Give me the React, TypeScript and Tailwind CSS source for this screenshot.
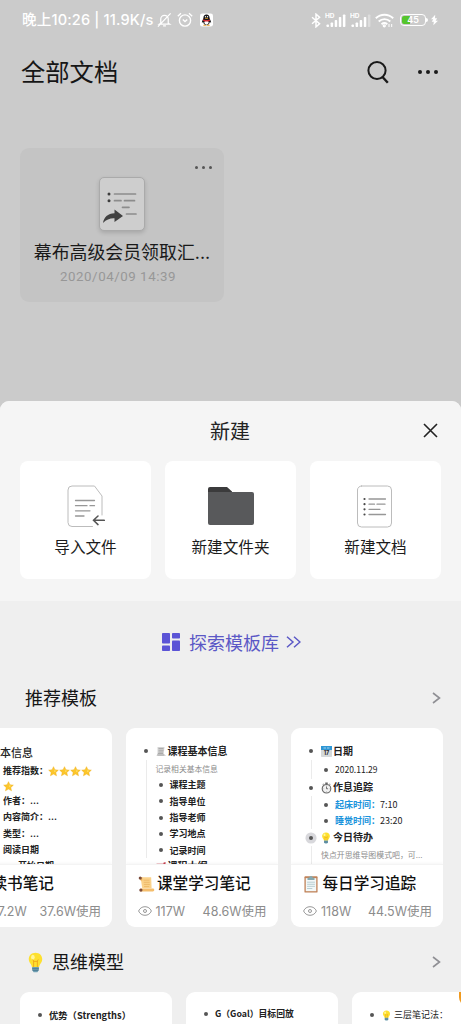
import type { ReactNode } from 'react';
import clsx from 'clsx';

type IconProps = { className?: string };

const Star = () => (
  <svg viewBox="0 0 20 20" className="inline-block w-[11px] h-[11px]">
    <path
      d="M10 1.2l2.6 5.6 6.2.7-4.6 4.2 1.3 6.1L10 14.7l-5.5 3.1 1.3-6.1L1.2 7.5l6.2-.7z"
      fill="#fcc62b"
      stroke="#f0ae1c"
      strokeWidth="0.8"
      strokeLinejoin="round"
    />
    <path d="M10 4l1.2 4.2 4 .4-3.5 2.2z" fill="#ffe680" />
  </svg>
);

const Bulb = ({ className }: IconProps) => (
  <svg viewBox="0 0 20 28" className={className}>
    <path
      d="M10 1C4.6 1 1 4.8 1 9.6c0 3.6 2.2 5.6 3.4 7.8.6 1.1.7 2.2.9 3.1h9.4c.2-.9.3-2 .9-3.1C16.8 15.2 19 13.2 19 9.6 19 4.8 15.4 1 10 1z"
      fill="#fde02f"
    />
    <ellipse cx="6.5" cy="7" rx="2.4" ry="3.4" fill="#fff59b" />
    <path d="M7.5 20V12l-1.2-2M12.5 20V12l1.2-2M7 12.5h6" stroke="#f0a81c" strokeWidth="1.3" fill="none" />
    <path d="M5.5 20h9v4l-2 3h-5l-2-3z" fill="#6f9fb3" />
    <path d="M5.5 22.2h9M6 24.5h8" stroke="#3f6f84" strokeWidth="0.9" />
  </svg>
);

const Scroll = ({ className }: IconProps) => (
  <svg viewBox="0 0 20 20" className={className}>
    <path d="M3 2h12.5l.5 13H5z" fill="#fbd28a" />
    <path d="M6.5 5.5h7M6.7 8h7M6.9 10.5h7M7.1 13h6" stroke="#e9b361" strokeWidth="0.9" />
    <path d="M3 15.3h14.5a1.7 1.7 0 010 3.4H3z" fill="#f4bd6c" />
    <path d="M2 2h3v4H3.5A2 2 0 012 4z" fill="#eeb058" />
    <circle cx="2.6" cy="3" r="1.8" fill="#7a4a3a" />
    <circle cx="3.4" cy="17.2" r="1.9" fill="#7a4a3a" />
  </svg>
);

const Clipboard = ({ className }: IconProps) => (
  <svg viewBox="0 0 16 20" className={className} preserveAspectRatio="none">
    <rect x="0.5" y="1.5" width="15" height="18" rx="1" fill="#c08258" />
    <rect x="2" y="3.5" width="12" height="14.5" fill="#f3f8f8" />
    <path d="M3.5 8h9M3.5 10.3h9M3.5 12.6h9M3.5 15h6" stroke="#a9c4c9" strokeWidth="0.9" />
    <path d="M4 5.5V3h2a2 2 0 014 0h2v2.5z" fill="#86a9b0" />
  </svg>
);

const Newspaper = ({ className }: IconProps) => (
  <svg viewBox="0 0 20 20" className={className}>
    <path d="M3 1h14l-1.500 13L20 19H1l2-6z" fill="#d4d4d4" />
    <path d="M5 4h10M5 7.500h10M5 11h9M4 14h10M3 17h13" stroke="#959595" strokeWidth="1.300" />
  </svg>
);

const Calendar = ({ className }: IconProps) => (
  <svg viewBox="0 0 22 22" className={className}>
    <rect width="22" height="22" rx="1.500" fill="#d5d9da" />
    <path d="M0 0h22v8H0z" fill="#2e96d4" />
    <path d="M5 4h5M12 4h5" stroke="#c9e6f6" strokeWidth="1.500" />
    <text x="11" y="18.500" textAnchor="middle" fontSize="11" fontWeight="700" fill="#222">
      17
    </text>
  </svg>
);

const Stopwatch = ({ className }: IconProps) => (
  <svg viewBox="0 0 22 24" className={className}>
    <path d="M8.500 1h5v3h-5zM2.500 5l2-2 2 2M15.500 5l2-2 2 2" fill="#666" />
    <circle cx="11" cy="13.500" r="8.600" fill="#f1f1f1" stroke="#686868" strokeWidth="2.200" />
    <path d="M11 7v1.500M11 18.500V20M4.800 13.500h1.500M15.700 13.500h1.500" stroke="#888" />
    <path d="M11 9v4.500h3" stroke="#444" strokeWidth="1.400" fill="none" />
  </svg>
);

const Pin = ({ className }: IconProps) => (
  <svg viewBox="0 0 20 20" className={className}>
    <path d="M1 3h13l3-2v8l-5 9H5z" fill="#dc8f97" />
    <path d="M14 2l5-2v6z" fill="#c23b49" />
  </svg>
);

const Eye = () => (
  <svg viewBox="0 0 14 10" className="w-[14px] h-[10px] -mt-[3px]" fill="none" stroke="#8c8c8c" strokeWidth="0.9">
    <path d="M.6 5C1.7 2.3 4.1.7 7 .7s5.300 1.600 6.400 4.300C12.300 7.700 9.900 9.300 7 9.300S1.700 7.700.6 5z" />
    <circle cx="7" cy="5" r="1.500" />
  </svg>
);

const Chevron = () => (
  <svg viewBox="0 0 9 12" className="w-[9px] h-[12px] -mt-[2px]" fill="none" stroke="#8f8f94" strokeWidth="1.6">
    <path d="M1 1l6.5 5L1 11" />
  </svg>
);

const Signal = ({ weak }: { weak?: boolean }) => (
  <svg viewBox="0 0 21 15" className="w-[21px] h-[15px]" fill="#fff">
    <text x="0" y="5.3" fontSize="6.5" fontWeight="700" fontFamily="Inter, sans-serif">
      HD
    </text>
    <rect x="1.5" y="11.5" width="2.5" height="2.5" rx="0.8" />
    <rect x="5.6" y="9.5" width="2.5" height="4.5" rx="0.8" />
    <rect x="9.7" y="7" width="2.5" height="7" rx="0.8" />
    <rect x="13.8" y="4" width="2.5" height="10" rx="0.8" />
    <rect x="17.9" y="1.5" width="2.5" height="12.5" rx="0.8" opacity={weak ? 0.35 : 1} />
  </svg>
);

const StatusBar = () => (
  <div className="h-10 pl-[22px] pr-[23px] flex items-center justify-between text-white">
    <div className="flex items-center">
      <span className="w-[132px] text-[14.6px] leading-5 font-medium whitespace-pre tracking-[0.15px]">
        晚上10:26 | 11.9K/s
      </span>
      <svg viewBox="0 0 16 16" className="ml-[3px] w-[15px] h-[16px]" fill="none" stroke="#fff" strokeWidth="1.3">
        <path d="M4 11.5V7a4 4 0 018 0v4.5l1.5 1h-11zM6.5 14.2h3M14.5 1L1 15" />
      </svg>
      <svg viewBox="0 0 16 16" className="ml-[5px] w-[16px] h-[16px]" fill="none" stroke="#fff" strokeWidth="1.4">
        <circle cx="8" cy="8.5" r="5.6" />
        <path d="M.8 4.2L4 1.3M15.2 4.2L12 1.3M5.8 7.5L8 9.5l2.3-2" />
      </svg>
      <svg viewBox="0 0 14 14" className="ml-[7px] w-[13px] h-[14px]">
        <rect width="14" height="14" rx="2.5" fill="#fff" />
        <path
          d="M7 1.2c-2.3 0-3.3 1.7-3.3 3.5 0 1.5-1.7 3-1.7 5.2l1.4-.8C4 11.5 5.3 12.6 7 12.6s3-1.1 3.600-3.5l1.4.8c0-2.2-1.7-3.7-1.7-5.2 0-1.8-1-3.5-3.3-3.5z"
          fill="#17171a"
        />
        <ellipse cx="7" cy="9.8" rx="2.3" ry="2.3" fill="#fff" />
        <path d="M3.5 6.3c2 1.2 5 1.2 7 0l.3 1.5c-2 1.2-5.6 1.2-7.6 0z" fill="#d8232f" />
        <circle cx="5.9" cy="3.5" r="0.7" fill="#fff" />
        <circle cx="8.1" cy="3.5" r="0.7" fill="#fff" />
        <ellipse cx="7" cy="5.1" rx="1.7" ry="0.6" fill="#f0a020" />
        <path d="M3.6 12.7h2.8M7.6 12.7h2.8" stroke="#f0a020" strokeWidth="1" />
      </svg>
    </div>
    <div className="flex items-center">
      <svg viewBox="0 0 10 16" className="w-[10px] h-[15px]" fill="none" stroke="#fff" strokeWidth="1.6">
        <path d="M.8 4.5l8 7L5 14.8V1.2l3.8 3.3-8 7" />
      </svg>
      <div className="ml-[4px] flex gap-[4px]">
        <Signal />
        <Signal weak />
      </div>
      <svg viewBox="0 0 19 15" className="ml-[4px] w-[19px] h-[15px]" fill="none" stroke="#fff" strokeWidth="1.9">
        <path d="M.8 5.300c5-4.700 12.400-4.700 17.400 0M3.700 8.500c3.400-3.200 8.200-3.200 11.600 0M6.500 11.300c1.800-1.500 4-1.500 5.800 0" />
        <circle cx="9.300" cy="12.800" r="0.700" />
        <path d="M14 11v3M16.700 11v3" strokeWidth="1" />
      </svg>
      <div className="ml-[6px] flex items-center">
        <div className="w-[26px] h-[12px] p-px border border-white rounded-[4px]">
          <div className="relative w-full h-full">
            <div className="w-[8px] h-full bg-[#55c52c] rounded-l-[2px]" />
            <span className="absolute -inset-y-px inset-x-0 text-center text-[9px] leading-[10px] font-semibold">
              45
            </span>
          </div>
        </div>
        <div className="w-[2px] h-[4px] bg-white rounded-r" />
      </div>
      <svg viewBox="0 0 8 12" className="ml-[3px] w-[7px] h-[12px]" fill="#fff">
        <path d="M4.800 0L0 5.200h2.600L.8 8h2.400L2.700 12 8 6.800H5.300L7 4H4.600z" />
      </svg>
    </div>
  </div>
);

const FileCard = () => (
  <div className="ml-5 mt-[44px] w-[204px] h-[154px] bg-[#c4c4c4] rounded-[9px] flex flex-col items-center">
    <div className="w-full h-[28px] pt-[18px] pr-[12px] flex justify-end gap-[4px]">
      <i className="w-[3px] h-[3px] rounded-full bg-[#555]" />
      <i className="w-[3px] h-[3px] rounded-full bg-[#555]" />
      <i className="w-[3px] h-[3px] rounded-full bg-[#555]" />
    </div>
    <div className="mt-px w-[46px] h-[54px] bg-[#cecece] border border-[#aaa] rounded-[5px] shadow-[0_2px_4px_rgba(0,0,0,0.15)]">
      <svg viewBox="0 0 44 52" className="w-[44px] h-[52px]">
        <circle cx="9" cy="16" r="1.5" fill="#3d3d3d" />
        <circle cx="9" cy="22.7" r="1.5" fill="#3d3d3d" />
        <path
          d="M14.5 16h21M14.5 22.7h6.5M24.5 22.7h10M22.5 29.3h6.500M26.500 36h9.500"
          stroke="#8c8c8c"
          strokeWidth="1.700"
          strokeLinecap="round"
        />
        <path d="M14.500 31.500l8.500 6.500-8.500 6v-3.700c-4.500-.2-8 1.200-11.500 4.700.8-5.700 4.800-9.600 11.500-9.800z" fill="#414141" />
      </svg>
    </div>
    <p className="mt-[8px] text-[17.900px] leading-[28px] text-[#191919] whitespace-nowrap">幕布高级会员领取汇...</p>
    <p className="mt-px pr-[8px] text-[13.300px] leading-[18px] text-[#979797] tracking-[0.550px] font-[Roboto]">
      2020/04/09 14:39
    </p>
  </div>
);

const ActionTile = ({ label, children }: { label: string; children: ReactNode }) => (
  <button className="flex-1 h-[118px] pt-[23px] bg-white rounded-[8px] flex flex-col items-center">
    <span className="h-[44px] flex items-center">{children}</span>
    <span className="mt-[8px] text-[15.600px] leading-6 text-[#1c1c1c]">{label}</span>
  </button>
);

const Bullet = () => <i className="shrink-0 w-[4px] h-[4px] rounded-full bg-[#555]" />;

type SectionProps = {
  icon?: ReactNode;
  title: string;
  height: string;
  active?: boolean;
  children?: ReactNode;
};

const Section = ({ icon, title, height, active, children }: SectionProps) => (
  <div>
    <div className={clsx('pl-[18px] flex items-center text-[10px] font-bold text-[#222] whitespace-nowrap', height)}>
      <i className={clsx('shrink-0 w-[4px] h-[4px] rounded-full bg-[#555]', active && 'ring-[3.500px] ring-[#d8d8dc]')} />
      <span className="w-[12px] ml-[8px] shrink-0">{icon}</span>
      {title}
    </div>
    {children && <div className="ml-[20px] border-l border-[#ebebeb]">{children}</div>}
  </div>
);

const Item = ({ height, children }: { height: string; children: ReactNode }) => (
  <div className={clsx('pl-[12px] flex items-center gap-[7px] text-[9px] text-[#222] whitespace-nowrap', height)}>
    <Bullet />
    <span>{children}</span>
  </div>
);

type CardProps = {
  icon?: ReactNode;
  title: string;
  views: string;
  uses: string;
  children: ReactNode;
};

const TemplateCard = ({ icon, title, views, uses, children }: CardProps) => (
  <article className="shrink-0 w-[152px] h-[199px] bg-white rounded-[9px] overflow-hidden">
    <div className="h-[136px] pt-[14px] overflow-hidden">{children}</div>
    <div className="h-[63px] pl-[12px] pr-[11px] border-t border-[#f4f4f4] shadow-[0_-1px_3px_rgba(0,0,0,0.04)]">
      <div className="pt-[7px] flex items-center text-[15.600px] leading-6 font-medium text-[#111] whitespace-nowrap">
        <span className="w-[19.500px] shrink-0">{icon}</span>
        {title}
      </div>
      <div className="mt-[6px] flex items-center text-[12.500px] leading-5 text-[#8c8c8c] whitespace-nowrap">
        <Eye />
        <span className="ml-[4px]">{views}</span>
        <span className="ml-auto">{uses}</span>
      </div>
    </div>
  </article>
);

const classItems = ['课程主题', '指导单位', '指导老师', '学习地点', '记录时间'];

function App() {
  return (
    <div className="w-full h-screen overflow-hidden flex flex-col bg-[#cbcbcb] font-[Inter,'Noto_Sans_CJK_SC',sans-serif]">
      <div className="h-[401px] shrink-0">
        <StatusBar />
        <header className="h-16 pl-[21px] pr-[23px] flex items-center justify-between text-[#161616]">
          <h1 className="text-[24.300px] leading-8">全部文档</h1>
          <div className="flex items-center gap-[29px]">
            <svg viewBox="0 0 22 24" className="w-[22px] h-[24px]" fill="none" stroke="#1a1a1a" strokeWidth="2">
              <circle cx="10" cy="10.500" r="8.600" />
              <path d="M15.500 17l5.300 5.800" strokeWidth="2.400" />
            </svg>
            <div className="flex gap-[4px]">
              <i className="w-[4px] h-[4px] rounded-full bg-[#1a1a1a]" />
              <i className="w-[4px] h-[4px] rounded-full bg-[#1a1a1a]" />
              <i className="w-[4px] h-[4px] rounded-full bg-[#1a1a1a]" />
            </div>
          </div>
        </header>
        <FileCard />
      </div>

      <section className="grow bg-[#efefef] rounded-t-[9px] overflow-hidden">
        <div className="h-[200px] px-5 bg-[#f5f5f5]">
          <div className="h-[60px] pr-[3px] flex items-center">
            <span className="w-[17px]" />
            <h2 className="grow pt-[2px] text-center text-[20px] leading-7 text-[#222]">新建</h2>
            <svg viewBox="0 0 15 15" className="-mt-[2px] w-[15px] h-[15px]" stroke="#222" strokeWidth="1.6">
              <path d="M1 1l13 13M14 1L1 14" />
            </svg>
          </div>
          <div className="flex gap-[14px]">
            <ActionTile label="导入文件">
              <svg viewBox="0 0 38 44" className="w-[38px] h-[44px]" fill="none" strokeLinecap="round">
                <path d="M25.500 42.500H5a4 4 0 01-4-4V6a4 4 0 014-4h22.500l7.500 10V31" stroke="#bcbcbc" />
                <path
                  d="M8.500 16.500h19M8.500 21.700h11.500M23 21.700h4.500M8.500 26.800H23M8.500 32h8.500"
                  stroke="#979797"
                  strokeWidth="1.300"
                />
                <path d="M37.300 36.300H27M31 32l-4.500 4.300 4.500 4.300" stroke="#555" strokeWidth="1.500" />
              </svg>
            </ActionTile>
            <ActionTile label="新建文件夹">
              <svg viewBox="0 0 46 40" className="w-[46px] h-[40px]">
                <path d="M2 1h17l5 4.500V14H0V3a2 2 0 012-2z" fill="#3b3b3c" />
                <path d="M0 6h44a2 2 0 012 2v29a2 2 0 01-2 2H2a2 2 0 01-2-2z" fill="#58595b" />
              </svg>
            </ActionTile>
            <ActionTile label="新建文档">
              <svg viewBox="0 0 35 43" className="mr-[2px] w-[35px] h-[43px]" fill="none" strokeLinecap="round">
                <rect x="0.500" y="1" width="34" height="41" rx="4" stroke="#bcbcbc" />
                <path d="M12 14h16.500M12 19.200h5.500M20 19.200h8M12 24.300h11M12 29.500h16.500" stroke="#979797" strokeWidth="1.300" />
                <path d="M7.500 14h.01M7.500 19.200h.01M7.500 24.300h.01M7.500 29.500h.01" stroke="#4a4a4a" strokeWidth="2.200" />
              </svg>
            </ActionTile>
          </div>
        </div>

        <div className="h-[82px] pl-[2px] flex items-center justify-center text-[#5b58c6]">
          <svg viewBox="0 0 18 18" className="w-[18px] h-[18px]" fill="#5b54d6">
            <rect width="8" height="10.500" rx="0.800" />
            <rect x="10" width="8" height="5.500" rx="0.800" />
            <rect y="12.500" width="8" height="5.500" rx="0.800" />
            <rect x="10" y="7.500" width="8" height="10.500" rx="0.800" />
          </svg>
          <span className="pt-[3px] ml-[9px] text-[18px] leading-7">探索模板库</span>
          <svg viewBox="0 0 15 12" className="ml-[7px] w-[15px] h-[12px]" fill="none" stroke="#5b58c6" strokeWidth="1.5">
            <path d="M1 .7L7 6l-6 5.300M8 .7L14 6l-6 5.300" />
          </svg>
        </div>

        <div className="h-[45px] pb-[14px] pl-[25px] pr-5 flex items-center justify-between">
          <h3 className="text-[18px] leading-7 text-[#161616]">推荐模板</h3>
          <Chevron />
        </div>
        <div className="-ml-[40px] flex gap-[13.500px]">
          <TemplateCard title="读书笔记" views="37.2W" uses="37.6W使用">
            <div className="pl-[29px] pt-px text-[11px] leading-[20px] font-medium text-[#222]">基本信息</div>
            <div className="pl-[43px] text-[9px] font-bold text-[#222] whitespace-nowrap">
              <div className="h-[16px] flex items-center">
                推荐指数：
                <span className="flex">
                  <Star />
                  <Star />
                  <Star />
                  <Star />
                </span>
              </div>
              <div className="h-[14px] flex items-center">
                <Star />
              </div>
              <div className="leading-[16.400px]">
                <p>作者：...</p>
                <p>内容简介：...</p>
                <p>类型：...</p>
                <p>阅读日期</p>
                <p className="pl-[15px] -mt-px">开始日期</p>
              </div>
            </div>
          </TemplateCard>

          <TemplateCard
            icon={<Scroll className="w-[17px] h-[18px]" />}
            title="课堂学习笔记"
            views="117W"
            uses="48.6W使用"
          >
            <Section icon={<Newspaper className="w-[10px] h-[11px]" />} title="课程基本信息" height="h-[18px]">
              <p className="pl-[9px] pt-px text-[7.800px] leading-[16px] text-[#8c8c8c]">记录相关基本信息</p>
              {classItems.map((item) => (
                <Item key={item} height="h-[16.300px]">
                  <b>{item}</b>
                </Item>
              ))}
            </Section>
            <Section icon={<Pin className="w-[10px] h-[10px]" />} title="课程大纲" height="h-[17px]" />
          </TemplateCard>

          <TemplateCard
            icon={<Clipboard className="ml-[1px] w-[14px] h-[18px]" />}
            title="每日学习追踪"
            views="118W"
            uses="44.5W使用"
          >
            <Section icon={<Calendar className="w-[11px] h-[11px]" />} title="日期" height="h-[18px]">
              <Item height="h-[19px]">
                <span className="text-[8.500px] font-['Noto_Sans_CJK_SC']">2020.11.29</span>
              </Item>
            </Section>
            <Section icon={<Stopwatch className="w-[11px] h-[12px]" />} title="作息追踪" height="h-[17px]">
              <Item height="h-[17px]">
                <b className="text-[#1b94dc]">起床时间：</b>
                <span className="font-['Noto_Sans_CJK_SC']">7:10</span>
              </Item>
              <Item height="h-[16px]">
                <b className="text-[#1b94dc]">睡觉时间：</b>
                <span className="font-['Noto_Sans_CJK_SC']">23:20</span>
              </Item>
            </Section>
            <Section icon={<Bulb className="w-[10px] h-[12px]" />} title="今日待办" height="h-[17px]" active>
              <p className="pl-[9px] text-[7.900px] leading-[18px] text-[#8c8c8c] whitespace-nowrap">
                快点开思维导图模式吧，可...
              </p>
            </Section>
          </TemplateCard>
        </div>

        <div className="h-[65px] pt-[6px] pl-[27px] pr-5 flex items-center">
          <Bulb className="w-[17px] h-[21px]" />
          <h3 className="ml-[8px] grow text-[18px] leading-7 text-[#161616]">思维模型</h3>
          <Chevron />
        </div>
        <div className="pl-5 flex gap-[14px] text-[9.300px] leading-[14px] text-[#222] font-['Noto_Sans_CJK_SC',sans-serif]">
          <div className="shrink-0 w-[152px] h-[199px] pt-[16px] pl-[18px] bg-white rounded-[9px]">
            <div className="flex items-center gap-[7px] font-bold">
              <Bullet />
              优势（Strengths）
            </div>
          </div>
          <div className="shrink-0 w-[152px] h-[199px] pt-[15px] pl-[18px] bg-white rounded-[9px]">
            <div className="flex items-center gap-[7px] text-[8.800px] font-bold">
              <Bullet />
              G（Goal）目标回放
            </div>
          </div>
          <div className="relative shrink-0 w-[152px] h-[199px] pt-[16px] pl-[18px] bg-white rounded-[9px]">
            <div className="flex items-center text-[9px]">
              <Bullet />
              <Bulb className="ml-[8px] mr-[3px] w-[9px] h-[11px]" />
              三层笔记法：
            </div>
            <div className="absolute top-0 left-[107px] w-[45px] h-[15px] bg-[#f09a1f] rounded-bl-[10px] rounded-tr-[9px]" />
          </div>
        </div>
      </section>
    </div>
  );
}

export default App;
